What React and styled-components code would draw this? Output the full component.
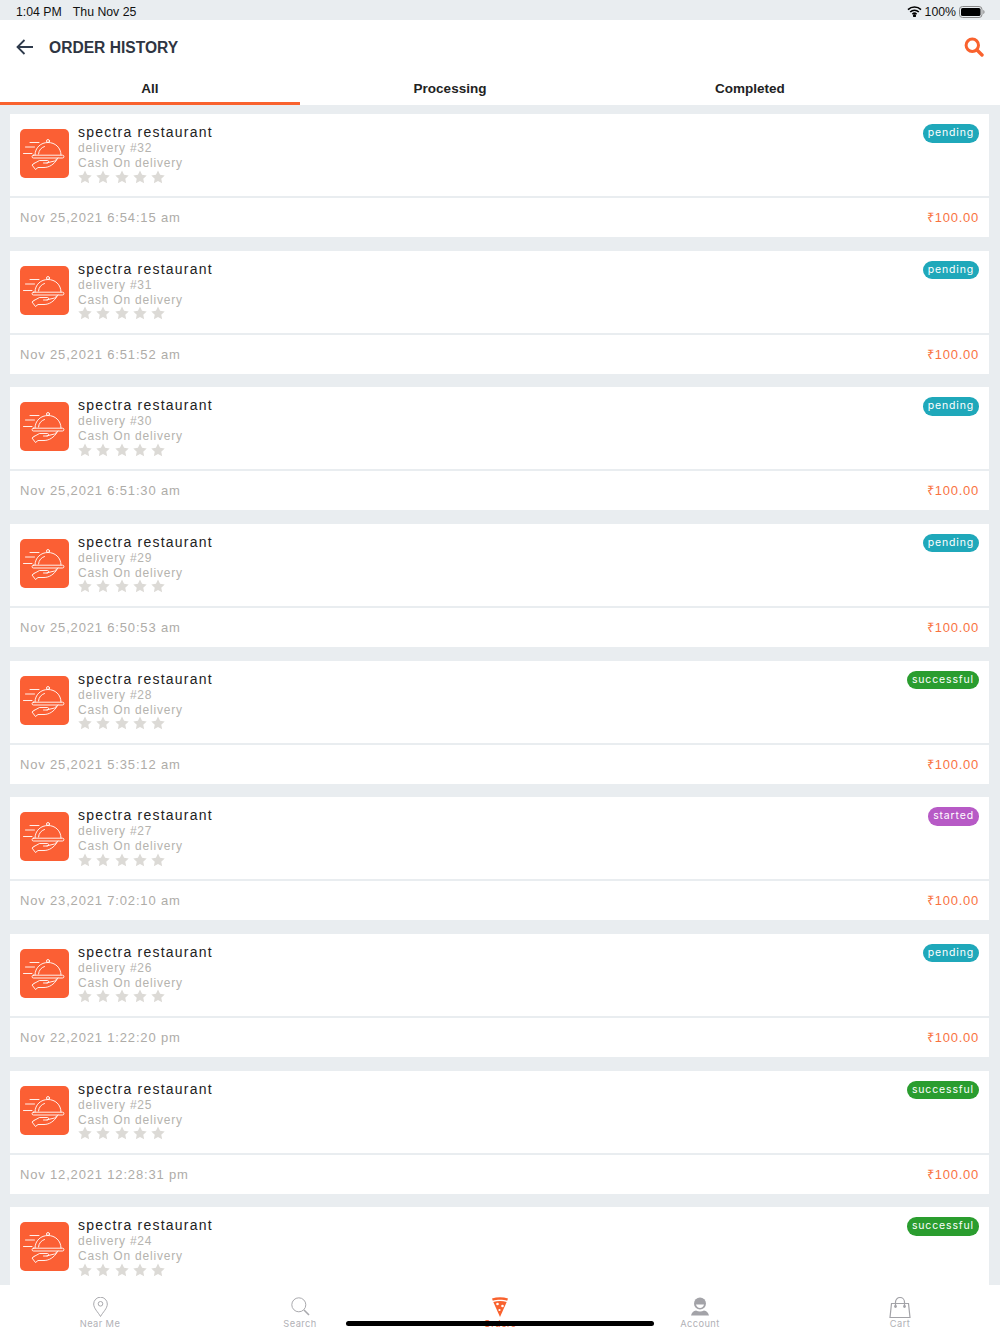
import styled, { createGlobalStyle } from "styled-components";

const orders = [
  { id: 32, date: "Nov 25,2021 6:54:15 am", status: "pending" },
  { id: 31, date: "Nov 25,2021 6:51:52 am", status: "pending" },
  { id: 30, date: "Nov 25,2021 6:51:30 am", status: "pending" },
  { id: 29, date: "Nov 25,2021 6:50:53 am", status: "pending" },
  { id: 28, date: "Nov 25,2021 5:35:12 am", status: "successful" },
  { id: 27, date: "Nov 23,2021 7:02:10 am", status: "started" },
  { id: 26, date: "Nov 22,2021 1:22:20 pm", status: "pending" },
  { id: 25, date: "Nov 12,2021 12:28:31 pm", status: "successful" },
  { id: 24, date: "Nov 12,2021 12:20:11 pm", status: "successful" },
];

const statusColors = {
  pending: "#1fa8ba",
  successful: "#2a9d2f",
  started: "#b75ac6",
};

const GlobalStyle = createGlobalStyle`
  html, body {
    margin: 0;
    padding: 0;
    background: #e9edf0;
    font-family: "Liberation Sans", Arial, sans-serif;
  }
  * { box-sizing: border-box; }
`;

const Page = styled.div`
  width: 1000px;
  height: 1334px;
  overflow: hidden;
  position: relative;
  background: #e9edf0;
`;

const StatusBar = styled.div`
  height: 20px;
  padding: 3px 15px 0 16px;
  display: flex;
  align-items: center;
  justify-content: space-between;
  font-size: 12.300px;
  color: #111;
`;

const StatusLeft = styled.div`
  display: flex;
  gap: 11px;
`;

const StatusRight = styled.div`
  display: flex;
  align-items: center;
  gap: 3px;
`;

const Header = styled.header`
  height: 52px;
  background: #fff;
  display: flex;
  align-items: center;
  padding: 2px 16px 0 16px;
`;

const Title = styled.h1`
  margin: 1px 0 0 16px;
  flex: 1;
  font-size: 15.600px;
  font-weight: 700;
  color: #2f3542;
`;

const Tabs = styled.nav`
  height: 33px;
  background: #fff;
  display: flex;
`;

const Tab = styled.div`
  width: 300px;
  text-align: center;
  font-size: 13.500px;
  font-weight: 700;
  color: #222;
  padding-top: 9px;
  border-bottom: 3px solid ${(p) => (p.$active ? "#f9622e" : "transparent")};
`;

const List = styled.main`
  padding: 9px 11px 0 10px;
`;

const Card = styled.article`
  height: 123px;
  margin-bottom: 13.670px;
  background: #fff;
`;

const CardTop = styled.div`
  height: 84px;
  padding: 15px 10px 0;
  display: flex;
  border-bottom: 2px solid #e9edf0;
`;

const Thumb = styled.div`
  width: 49px;
  height: 49px;
  border-radius: 5px;
  background: #fb5f34;
  flex: none;
`;

const Info = styled.div`
  margin-left: 9px;
  flex: 1;
  margin-top: -5px;
`;

const Name = styled.div`
  font-size: 14px;
  line-height: 17px;
  letter-spacing: 1.220px;
  color: #222;
`;

const Meta = styled.div`
  font-size: 12px;
  line-height: 15px;
  letter-spacing: 0.800px;
  color: #b5b3ae;
`;

const Stars = styled.div`
  display: flex;
  gap: 4.300px;
  margin-top: -1.500px;
`;

const Badge = styled.span`
  align-self: flex-start;
  margin-top: -5px;
  height: 18.500px;
  padding: 0 5px;
  border-radius: 9.250px;
  font-family: Inter, "Liberation Sans", sans-serif;
  font-size: 10.500px;
  line-height: 18.500px;
  letter-spacing: 0.850px;
  color: #fff;
  background: ${(p) => statusColors[p.$status]};
`;

const CardBottom = styled.div`
  height: 39px;
  padding: 12px 10px 0;
  display: flex;
  align-items: baseline;
  justify-content: space-between;
  font-size: 13px;
  line-height: 15px;
  letter-spacing: 0.830px;
  color: #aeaca8;
`;

const Price = styled.span`
  letter-spacing: 0.750px;
  color: #f9733f;
`;

const BottomNav = styled.footer`
  position: absolute;
  left: 0;
  right: 0;
  bottom: 0;
  height: 49px;
  background: #fff;
  display: flex;
`;

const NavItem = styled.div`
  flex: 1;
  display: flex;
  flex-direction: column;
  align-items: center;
  padding-top: 12px;
  font-family: Inter, "Liberation Sans", sans-serif;
  font-size: 9.300px;
  letter-spacing: 0.400px;
  line-height: 11px;
  color: ${(p) => (p.$active ? "#f9622e" : "#b1b1b6")};
`;

const NavIcon = styled.div`
  height: 21px;
`;

const HomeBar = styled.div`
  position: absolute;
  left: 346px;
  bottom: 8px;
  width: 308px;
  height: 5px;
  border-radius: 3px;
  background: #000;
`;

function BackArrow() {
  return (
    <svg width="17" height="16" viewBox="0 0 17 16" fill="none" stroke="#2f3b4c" strokeWidth="1.800">
      <path d="M17 8H1.500M8.500 1 1.500 8l7 7" />
    </svg>
  );
}

function SearchIcon() {
  return (
    <svg width="20" height="20" viewBox="0 0 20 20" fill="none" stroke="#f9622e">
      <circle cx="8.300" cy="8.300" r="6.200" strokeWidth="3" />
      <path d="M13 13l5 5" strokeWidth="3.400" strokeLinecap="round" />
    </svg>
  );
}

function Wifi() {
  return (
    <svg width="15" height="11" viewBox="0 0 15 11" fill="none" stroke="#000" strokeWidth="1.600">
      <path d="M1 3.600a9.400 9.400 0 0 1 13 0M3.200 6a6.200 6.200 0 0 1 8.600 0M5.400 8.200a3 3 0 0 1 4.200 0" />
      <circle cx="7.500" cy="9.700" r=".8" fill="#000" />
    </svg>
  );
}

function Battery() {
  return (
    <svg width="26" height="12" viewBox="0 0 26 12">
      <rect x=".5" y=".5" width="22.500" height="11" rx="3" fill="none" stroke="#888" />
      <rect x="2" y="2" width="19.500" height="8" rx="1.600" fill="#000" />
      <path d="M24.300 4v4c.8-.2 1.200-1 1.200-2s-.4-1.800-1.200-2z" fill="#888" />
    </svg>
  );
}

function Cloche() {
  return (
    <svg width="49" height="49" viewBox="0 0 49 49" fill="none" stroke="#fff" strokeWidth="0.900" strokeLinecap="round" strokeLinejoin="round">
      <path d="M10 13.500h9M5.500 18h9M3.500 24.500h8.500" />
      <circle cx="28" cy="12" r="1.500" />
      <path d="M15 26C15 18.500 21 13.500 28 13.500S41 18.500 41 26" />
      <path d="M13.500 26.200h29a1.400 1.400 0 0 1 0 2.800h-29a1.400 1.400 0 0 1 0-2.800z" />
      <path d="M18.500 25c.3-3.800 2.800-6.500 6-7.500" />
      <path d="M14 34.500l5.500-3h8c1.500 0 1.500 2.500 0 2.500h-4M27 33.800l7.500-1.800 3.500-3" />
      <path d="M14 34.500l-2 1.500 3.500 4.500 2.500-2h6c5 0 10-3 13-8" />
    </svg>
  );
}

function Star() {
  return (
    <svg width="14" height="14" viewBox="0 0 24 24" fill="#dcdad6">
      <path d="M12 .8l3.500 7.400 8 1.100-5.900 5.600 1.500 8L12 19l-7.100 3.900 1.500-8L.5 9.300l8-1.100z" />
    </svg>
  );
}

function PinIcon() {
  return (
    <svg width="15" height="20" viewBox="0 0 15 20" fill="none" stroke="#a9a9ad" strokeWidth="1">
      <path d="M7.500 19.500C5 15 .7 11.500.7 7a6.800 6.800 0 0 1 13.600 0c0 4.500-4.300 8-6.800 12.500z" />
      <circle cx="7.500" cy="6.800" r="2.300" />
    </svg>
  );
}

function NavSearchIcon() {
  return (
    <svg width="19" height="19" viewBox="0 0 19 19" fill="none" stroke="#a9a9ad">
      <circle cx="7.800" cy="7.800" r="7" strokeWidth="1" />
      <path d="M13 13l5 5" strokeWidth="1.600" />
    </svg>
  );
}

function PizzaIcon() {
  return (
    <svg width="16" height="20" viewBox="0 0 16 20">
      <path d="M0 1.500C5 -.2 11-.2 16 1.500l-.8 2.200C11 2.300 5 2.300.8 3.700z" fill="#f9622e" />
      <path d="M1.300 5C5.500 3.600 10.500 3.600 14.700 5L8 20z" fill="#f9622e" />
      <circle cx="5.500" cy="7" r="1.300" fill="#fff" />
      <circle cx="10.500" cy="9" r="1.300" fill="#fff" />
      <circle cx="7.500" cy="13" r="1.100" fill="#fff" />
    </svg>
  );
}

function AccountIcon() {
  return (
    <svg width="18" height="19" viewBox="0 0 18 19" fill="#a3a3a8">
      <circle cx="9" cy="6.500" r="6" />
      <path d="M5 7.500h8c-.5 2.300-2 3.500-4 3.500s-3.500-1.200-4-3.500z" fill="#fff" />
      <path d="M0 18.500c.8-3 2.500-4.500 5-5 2.500 1.200 5.500 1.200 8 0 2.500.5 4.200 2 5 5z" />
    </svg>
  );
}

function CartIcon() {
  return (
    <svg width="22" height="21" viewBox="0 0 22 21" fill="none" stroke="#a3a3a8" strokeWidth="1.200">
      <path d="M2.500 6.500h17l1.500 14H1z" />
      <path d="M6.500 9V5a4.500 4.500 0 0 1 9 0v4" />
      <circle cx="6.500" cy="9.500" r=".8" fill="#a3a3a8" />
      <circle cx="15.500" cy="9.500" r=".8" fill="#a3a3a8" />
    </svg>
  );
}

const navItems = [
  { label: "Near Me", icon: <PinIcon /> },
  { label: "Search", icon: <NavSearchIcon /> },
  { label: "Orders", icon: <PizzaIcon />, active: true },
  { label: "Account", icon: <AccountIcon /> },
  { label: "Cart", icon: <CartIcon /> },
];

export default function App() {
  return (
    <Page>
      <GlobalStyle />
      <StatusBar>
        <StatusLeft>
          <span>1:04 PM</span>
          <span>Thu Nov 25</span>
        </StatusLeft>
        <StatusRight>
          <Wifi />
          <span>100%</span>
          <Battery />
        </StatusRight>
      </StatusBar>
      <Header>
        <BackArrow />
        <Title>ORDER HISTORY</Title>
        <SearchIcon />
      </Header>
      <Tabs>
        <Tab $active>All</Tab>
        <Tab>Processing</Tab>
        <Tab>Completed</Tab>
      </Tabs>
      <List>
        {orders.map((order) => (
          <Card key={order.id}>
            <CardTop>
              <Thumb>
                <Cloche />
              </Thumb>
              <Info>
                <Name>spectra restaurant</Name>
                <Meta>delivery #{order.id}</Meta>
                <Meta>Cash On delivery</Meta>
                <Stars>
                  {[1, 2, 3, 4, 5].map((n) => (
                    <Star key={n} />
                  ))}
                </Stars>
              </Info>
              <Badge $status={order.status}>{order.status}</Badge>
            </CardTop>
            <CardBottom>
              <span>{order.date}</span>
              <Price>₹100.00</Price>
            </CardBottom>
          </Card>
        ))}
      </List>
      <BottomNav>
        {navItems.map((item) => (
          <NavItem key={item.label} $active={item.active}>
            <NavIcon>{item.icon}</NavIcon>
            {item.label}
          </NavItem>
        ))}
      </BottomNav>
      <HomeBar />
    </Page>
  );
}
